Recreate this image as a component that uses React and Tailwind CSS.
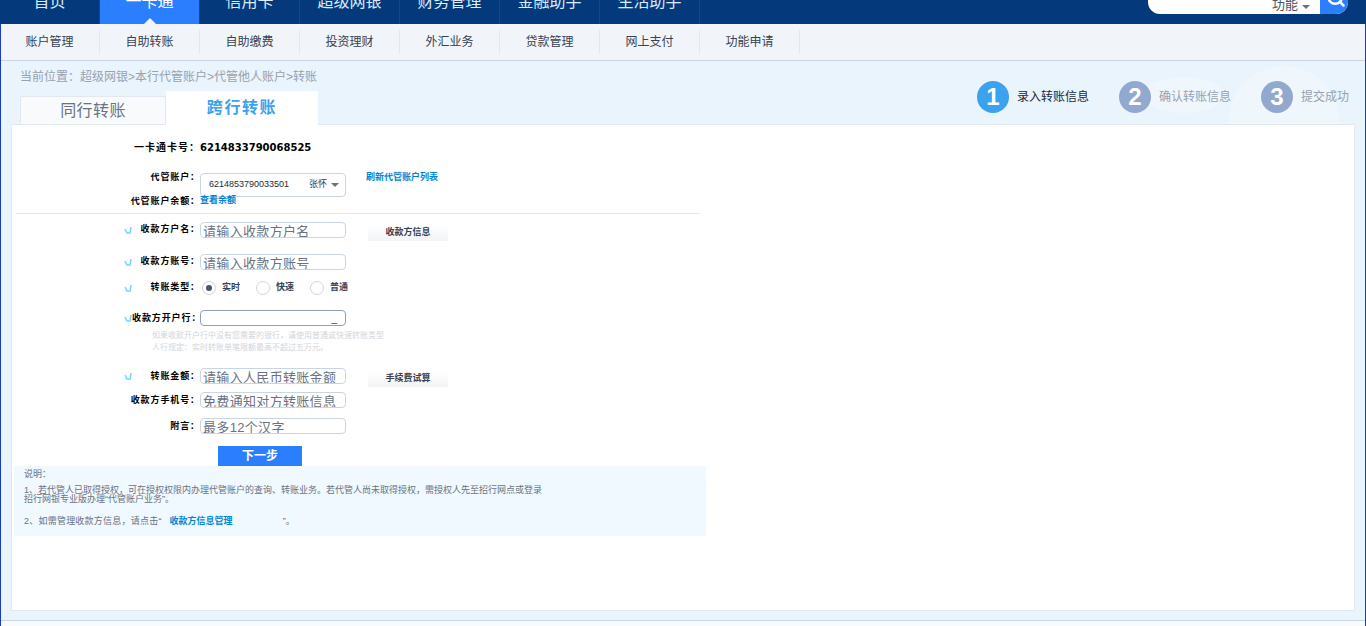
import { Search } from "lucide-react";

const navItems = ["首页", "一卡通", "信用卡", "超级网银", "财务管理", "金融助手", "生活助手"];
const subItems = ["账户管理", "自助转账", "自助缴费", "投资理财", "外汇业务", "贷款管理", "网上支付", "功能申请"];
const steps = [
  { n: 1, label: "录入转账信息", active: true },
  { n: 2, label: "确认转账信息" },
  { n: 3, label: "提交成功" },
];

function Mark() {
  return (
    <svg className="ml-28 h-2 w-2 shrink-0 text-sky-300" viewBox="0 0 8 8" fill="none" stroke="currentColor" strokeWidth="1.5">
      <path d="M1 3l2 4h3l1-6" />
    </svg>
  );
}

function Row({ label, mark, labelClass = "pt-0.5 text-[9px]", className = "", children }) {
  return (
    <div className={`flex items-center ${className}`}>
      <div className="flex w-47 items-center">
        {mark && <Mark />}
        <span className={`ml-auto font-bold tracking-widest whitespace-nowrap text-black ${labelClass}`}>{label}</span>
      </div>
      {children}
    </div>
  );
}

function TextField({ placeholder }) {
  return (
    <input
      placeholder={placeholder}
      className="h-4 w-36.5 rounded-sm border border-slate-300 px-0.5 pt-1 text-[13px] tracking-wide outline-none placeholder:text-gray-500"
    />
  );
}

function SmallButton({ children }) {
  return (
    <button type="button" className="mt-1.5 ml-5.5 h-4 w-20 bg-gradient-to-b from-white to-gray-100 text-[9px] font-bold text-gray-700">
      {children}
    </button>
  );
}

function Radio({ label, checked }) {
  return (
    <label className="flex w-13.5 items-center gap-1.5 text-[9px] font-bold text-gray-700">
      <span className="flex h-3.5 w-3.5 items-center justify-center rounded-full border border-gray-300">
        {checked && <span className="h-1.5 w-1.5 rounded-full bg-gray-600" />}
      </span>
      {label}
    </label>
  );
}

export default function App() {
  return (
    <div className="flex h-screen flex-col overflow-hidden bg-sky-50 font-['Liberation_Sans','Noto_Sans_CJK_SC',sans-serif]">
      <header className="flex h-6 shrink-0 items-start justify-between overflow-hidden bg-[#043a7c]">
        <nav className="flex">
          {navItems.map((item, i) => (
            <div
              key={item}
              className={`relative flex h-6 w-25 justify-center border-r border-blue-800 ${i === 1 ? "bg-blue-500 text-white" : "text-blue-100"}`}
            >
              <span className="-mt-2 text-base leading-5">{item}</span>
              {i === 1 && (
                <span className="absolute bottom-0 left-1/2 -ml-1.5 border-x-6 border-b-6 border-x-transparent border-b-slate-100" />
              )}
            </div>
          ))}
        </nav>
        <div className="mr-4.5 flex h-3.5 w-50 overflow-hidden rounded-b-xl bg-white">
          <span className="ml-auto flex items-center gap-1 pr-2.5 text-[13px] text-gray-600">
            <span className="-mt-1">功能</span>
            <span className="border-x-4 border-t-4 border-x-transparent border-t-gray-500" />
          </span>
          <span className="flex w-7 justify-center bg-blue-500 pl-1 text-white">
            <Search className="-mt-3 h-5 w-5" strokeWidth={3} />
          </span>
        </div>
      </header>

      <div className="relative flex flex-1 flex-col border-x border-blue-800">
        <nav className="box-content flex h-9 shrink-0 items-center border-b border-slate-300 bg-slate-100">
          {subItems.map((item, i) => (
            <a key={item} className={`flex h-6 w-25 items-center justify-center border-r border-slate-200 text-xs text-gray-700 ${i === 0 ? "-ml-px" : ""}`}>
              {item}
            </a>
          ))}
        </nav>

        <main className="relative flex flex-1 flex-col bg-[#e9f4fc]">
          <svg className="absolute top-0 right-0 h-16 w-64 text-white/30" viewBox="0 0 256 64" fill="currentColor">
            <ellipse cx="75" cy="34" rx="40" ry="18" />
            <circle cx="175" cy="60" r="55" />
          </svg>

          <div className="relative flex items-start justify-between pr-4 pl-5">
            <div className="-ml-px">
              <p className="mt-2 text-xs leading-4 text-gray-400">当前位置：超级网银&gt;本行代管账户&gt;代管他人账户&gt;转账</p>
              <div className="mt-1.5 flex items-end">
                <div className="flex h-7 w-36.5 items-center justify-center border border-b-0 border-slate-200 bg-slate-50 text-base tracking-wide text-gray-500">同行转账</div>
                <div className="z-10 -mb-px flex h-8.5 w-38 items-center justify-center bg-white text-base font-bold tracking-widest text-[#3aa2ee]">跨行转账</div>
              </div>
            </div>
            <ol className="mt-5 flex gap-7.5">
              {steps.map((s) => (
                <li key={s.n} className={`flex items-center gap-2 text-xs ${s.active ? "text-gray-800" : "text-gray-400"}`}>
                  <span className={`flex h-8 w-8 items-center justify-center rounded-full text-2xl font-bold text-white ${s.active ? "bg-[#3aa2ee]" : "bg-[#92a9cf]"}`}>
                    {s.n}
                  </span>
                  {s.label}
                </li>
              ))}
            </ol>
          </div>

          <section className="relative mx-2.5 border border-slate-200 bg-white pb-18.5">
            <form className="w-173 pt-3">
              <Row label="一卡通卡号：" labelClass="text-[10px]" className="h-5">
                <span className="font-['DejaVu_Sans'] text-[10px] font-bold text-black">6214833790068525</span>
              </Row>
              <Row label="代管账户：" labelClass="pb-3.5 text-[9px]" className="mt-4 h-6">
                <div className="flex h-6 w-36.5 items-center justify-between rounded-sm border border-slate-300 pr-1.5 pl-2 text-[9px] text-gray-800">
                  <span>6214853790033501</span>
                  <span className="flex items-center gap-1 text-gray-700">
                    张怀
                    <span className="border-x-4 border-t-4 border-x-transparent border-t-gray-500" />
                  </span>
                </div>
                <a className="mb-3.5 ml-5 text-[9px] font-bold text-sky-600">刷新代管账户列表</a>
              </Row>
              <Row label="代管账户余额：" className="h-2">
                <a className="text-[9px] font-bold text-sky-600">查看余额</a>
              </Row>
              <div className="mx-1 mt-2 h-px bg-slate-200" />

              <Row label="收款方户名：" mark labelClass="text-[9px]" className="mt-2 h-4">
                <TextField placeholder="请输入收款方户名" />
                <SmallButton>收款方信息</SmallButton>
              </Row>
              <Row label="收款方账号：" mark labelClass="text-[9px]" className="mt-4 h-4">
                <TextField placeholder="请输入收款方账号" />
              </Row>
              <Row label="转账类型：" mark labelClass="text-[9px]" className="mt-2.5 h-4">
                <div className="ml-0.5 flex">
                  <Radio label="实时" checked />
                  <Radio label="快速" />
                  <Radio label="普通" />
                </div>
              </Row>
              <Row label="收款方开户行：" mark className="mt-3.5 h-4">
                <div className="flex h-4 w-36.5 items-end justify-end rounded-sm border border-slate-400 pr-2 text-[10px] leading-3 text-gray-700">_</div>
              </Row>
              <div className="mt-1 ml-35 h-6 text-[8px] leading-3 text-gray-300">
                <p>如果收款开户行中没有您需要的银行，请使用普通或快速转账类型</p>
                <p>人行规定：实时转账单笔限额最高不超过五万元。</p>
              </div>
              <Row label="转账金额：" mark className="mt-3.5 h-4">
                <TextField placeholder="请输入人民币转账金额" />
                <SmallButton>手续费试算</SmallButton>
              </Row>
              <Row label="收款方手机号：" className="mt-2 h-4">
                <TextField placeholder="免费通知对方转账信息" />
              </Row>
              <Row label="附言：" className="mt-2.5 h-4">
                <TextField placeholder="最多12个汉字" />
              </Row>
              <div className="mt-3 ml-51.5 flex">
                <button type="button" className="h-5 w-21 bg-blue-500 text-xs font-bold text-white">下一步</button>
              </div>
            </form>

            <div className="ml-0.5 h-17.5 w-173 bg-sky-50 px-2.5 pt-1 text-[9px] leading-2 text-gray-500">
              <p>说明：</p>
              <p className="mt-2">1、若代管人已取得授权，可在授权权限内办理代管账户的查询、转账业务。若代管人尚未取得授权，需授权人先至招行网点或登录</p>
              <p className="mt-px">招行网银专业版办理“代管账户业务”。</p>
              <p className="mt-3.5 tracking-wide">
                2、如需管理收款方信息，请点击“
                <a className="ml-2 font-bold tracking-normal text-sky-600">收款方信息管理</a>
                <span className="ml-12.5">”。</span>
              </p>
            </div>
          </section>

          <div className="mt-auto h-1.5 border-t border-slate-300 bg-slate-50" />
        </main>
      </div>
    </div>
  );
}
